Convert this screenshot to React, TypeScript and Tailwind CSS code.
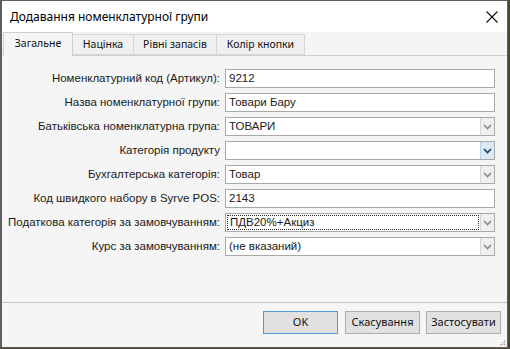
import React from "react";

const labelFont = { fontFamily: '"Liberation Sans", Arial, sans-serif' };

function Chevron({ active }: { active?: boolean }) {
  return (
    <svg width="9" height="6" viewBox="0 0 9 6">
      <path
        d="M1 1 L4.5 4.5 L8 1"
        fill="none"
        stroke={active ? "#1e3f66" : "#8a8a8a"}
        strokeWidth="1.6"
      />
    </svg>
  );
}

function TextField({ value }: { value: string }) {
  return (
    <div className="h-[19px] w-[270px] border border-[#a9a9a9] bg-white flex items-center pl-[3px] text-[11.5px] text-[#1a1a1a]" style={labelFont}>
      {value}
    </div>
  );
}

function SelectField({ value, active, focused }: { value: string; active?: boolean; focused?: boolean }) {
  return (
    <div className="h-[19px] w-[270px] border border-[#a9a9a9] bg-white flex text-[11.5px] text-[#1a1a1a]" style={labelFont}>
      <div className="flex-1 flex items-center p-[1px]">
        {focused ? (
          <div className="h-full w-full flex items-center pl-[2px] border border-dotted border-[#222]">{value}</div>
        ) : (
          <div className="pl-[2px]">{value}</div>
        )}
      </div>
      <div className={`w-[14px] flex items-center justify-center border-l ${active ? "bg-[#dbe8f5] border-[#b9d1ea]" : "bg-[#efefef] border-[#d6d6d6]"}`}>
        <Chevron active={active} />
      </div>
    </div>
  );
}

function Row({ label, children }: { label: string; children: React.ReactNode }) {
  return (
    <>
      <div className="h-[19px] flex items-center justify-end text-[11.5px] text-[#1a1a1a] whitespace-nowrap" style={labelFont}>
        {label}
      </div>
      {children}
    </>
  );
}

export default function App() {
  const uiFont = { fontFamily: '"Noto Sans", "Open Sans", sans-serif' };
  return (
    <div className="w-[510px] h-[349px] bg-[#4a4637] overflow-hidden">
      <div className="w-[508px] h-[348px] border border-[#5f5f5f] border-l-2 flex flex-col bg-[#f5f5f5]">
        {/* Title bar */}
        <div className="h-[31px] bg-white flex items-center justify-between pl-[8px] pr-[8px]">
          <div className="text-[12px] text-black" style={uiFont}>Додавання номенклатурної групи</div>
          <svg width="12" height="12" viewBox="0 0 12 12" className="mr-[1px]">
            <path d="M0.5 0.5 L11.5 11.5 M11.5 0.5 L0.5 11.5" stroke="#111" strokeWidth="1.1" />
          </svg>
        </div>
        {/* Tab strip */}
        <div className="h-[24px] bg-[#f5f5f5] flex items-end relative" style={uiFont}>
          <div className="absolute left-0 right-0 bottom-0 h-px bg-[#d0d0d0]" />
          <div className="relative z-10 ml-[1px] h-[24px] w-[70px] border border-b-0 border-[#cfcfcf] bg-[#f5f5f5] flex items-center justify-center text-[10.5px] text-[#111] pb-[1px]">
            Загальне
          </div>
          <div className="h-[21px] w-[61px] border border-l-0 border-[#d5d5d5] bg-[#f0f0f0] flex items-center justify-center text-[10.5px] text-[#111] mb-[1px]">
            Націнка
          </div>
          <div className="h-[21px] w-[83px] border border-l-0 border-[#d5d5d5] bg-[#f0f0f0] flex items-center justify-center text-[10.5px] text-[#111] mb-[1px]">
            Рівні запасів
          </div>
          <div className="h-[21px] w-[88px] border border-l-0 border-[#d5d5d5] bg-[#f0f0f0] flex items-center justify-center text-[10.5px] text-[#111] mb-[1px]">
            Колір кнопки
          </div>
        </div>
        {/* Panel */}
        <div className="h-[247px] border-b border-[#c4c4c4] pt-[13px] pl-[2px]">
          <div className="grid grid-cols-[216px_270px] gap-x-[5px] gap-y-[5px]">
            <Row label="Номенклатурний код (Артикул):"><TextField value="9212" /></Row>
            <Row label="Назва номенклатурної групи:"><TextField value="Товари Бару" /></Row>
            <Row label="Батьківська номенклатурна група:"><SelectField value="ТОВАРИ" /></Row>
            <Row label="Категорія продукту"><SelectField value="" active /></Row>
            <Row label="Бухгалтерська категорія:"><SelectField value="Товар" /></Row>
            <Row label="Код швидкого набору в Syrve POS:"><TextField value="2143" /></Row>
            <Row label="Податкова категорія за замовчуванням:"><SelectField value="ПДВ20%+Акциз" focused /></Row>
            <Row label="Курс за замовчуванням:"><SelectField value="(не вказаний)" /></Row>
          </div>
        </div>
        {/* Buttons */}
        <div className="flex-1 relative flex justify-end items-start pt-[8px] pr-[6px] gap-[7px]" style={uiFont}>
          <button className="h-[23px] w-[75px] border border-[#4f98d9] bg-[#e1e1e1] text-[11px] text-[#111]">OK</button>
          <button className="h-[23px] w-[75px] border border-[#adadad] bg-[#e1e1e1] text-[11px] text-[#111]">Скасування</button>
          <button className="h-[23px] w-[75px] border border-[#adadad] bg-[#e1e1e1] text-[11px] text-[#111] -ml-px">Застосувати</button>
          <svg width="7" height="7" viewBox="0 0 7 7" className="absolute right-[1px] bottom-[1px]">
            <rect x="5" y="1" width="1.2" height="1.2" fill="#a0a0a0" />
            <rect x="3" y="3" width="1.2" height="1.2" fill="#a0a0a0" />
            <rect x="5" y="3" width="1.2" height="1.2" fill="#a0a0a0" />
            <rect x="1" y="5" width="1.2" height="1.2" fill="#a0a0a0" />
            <rect x="3" y="5" width="1.2" height="1.2" fill="#a0a0a0" />
            <rect x="5" y="5" width="1.2" height="1.2" fill="#a0a0a0" />
          </svg>
        </div>
      </div>
    </div>
  );
}
